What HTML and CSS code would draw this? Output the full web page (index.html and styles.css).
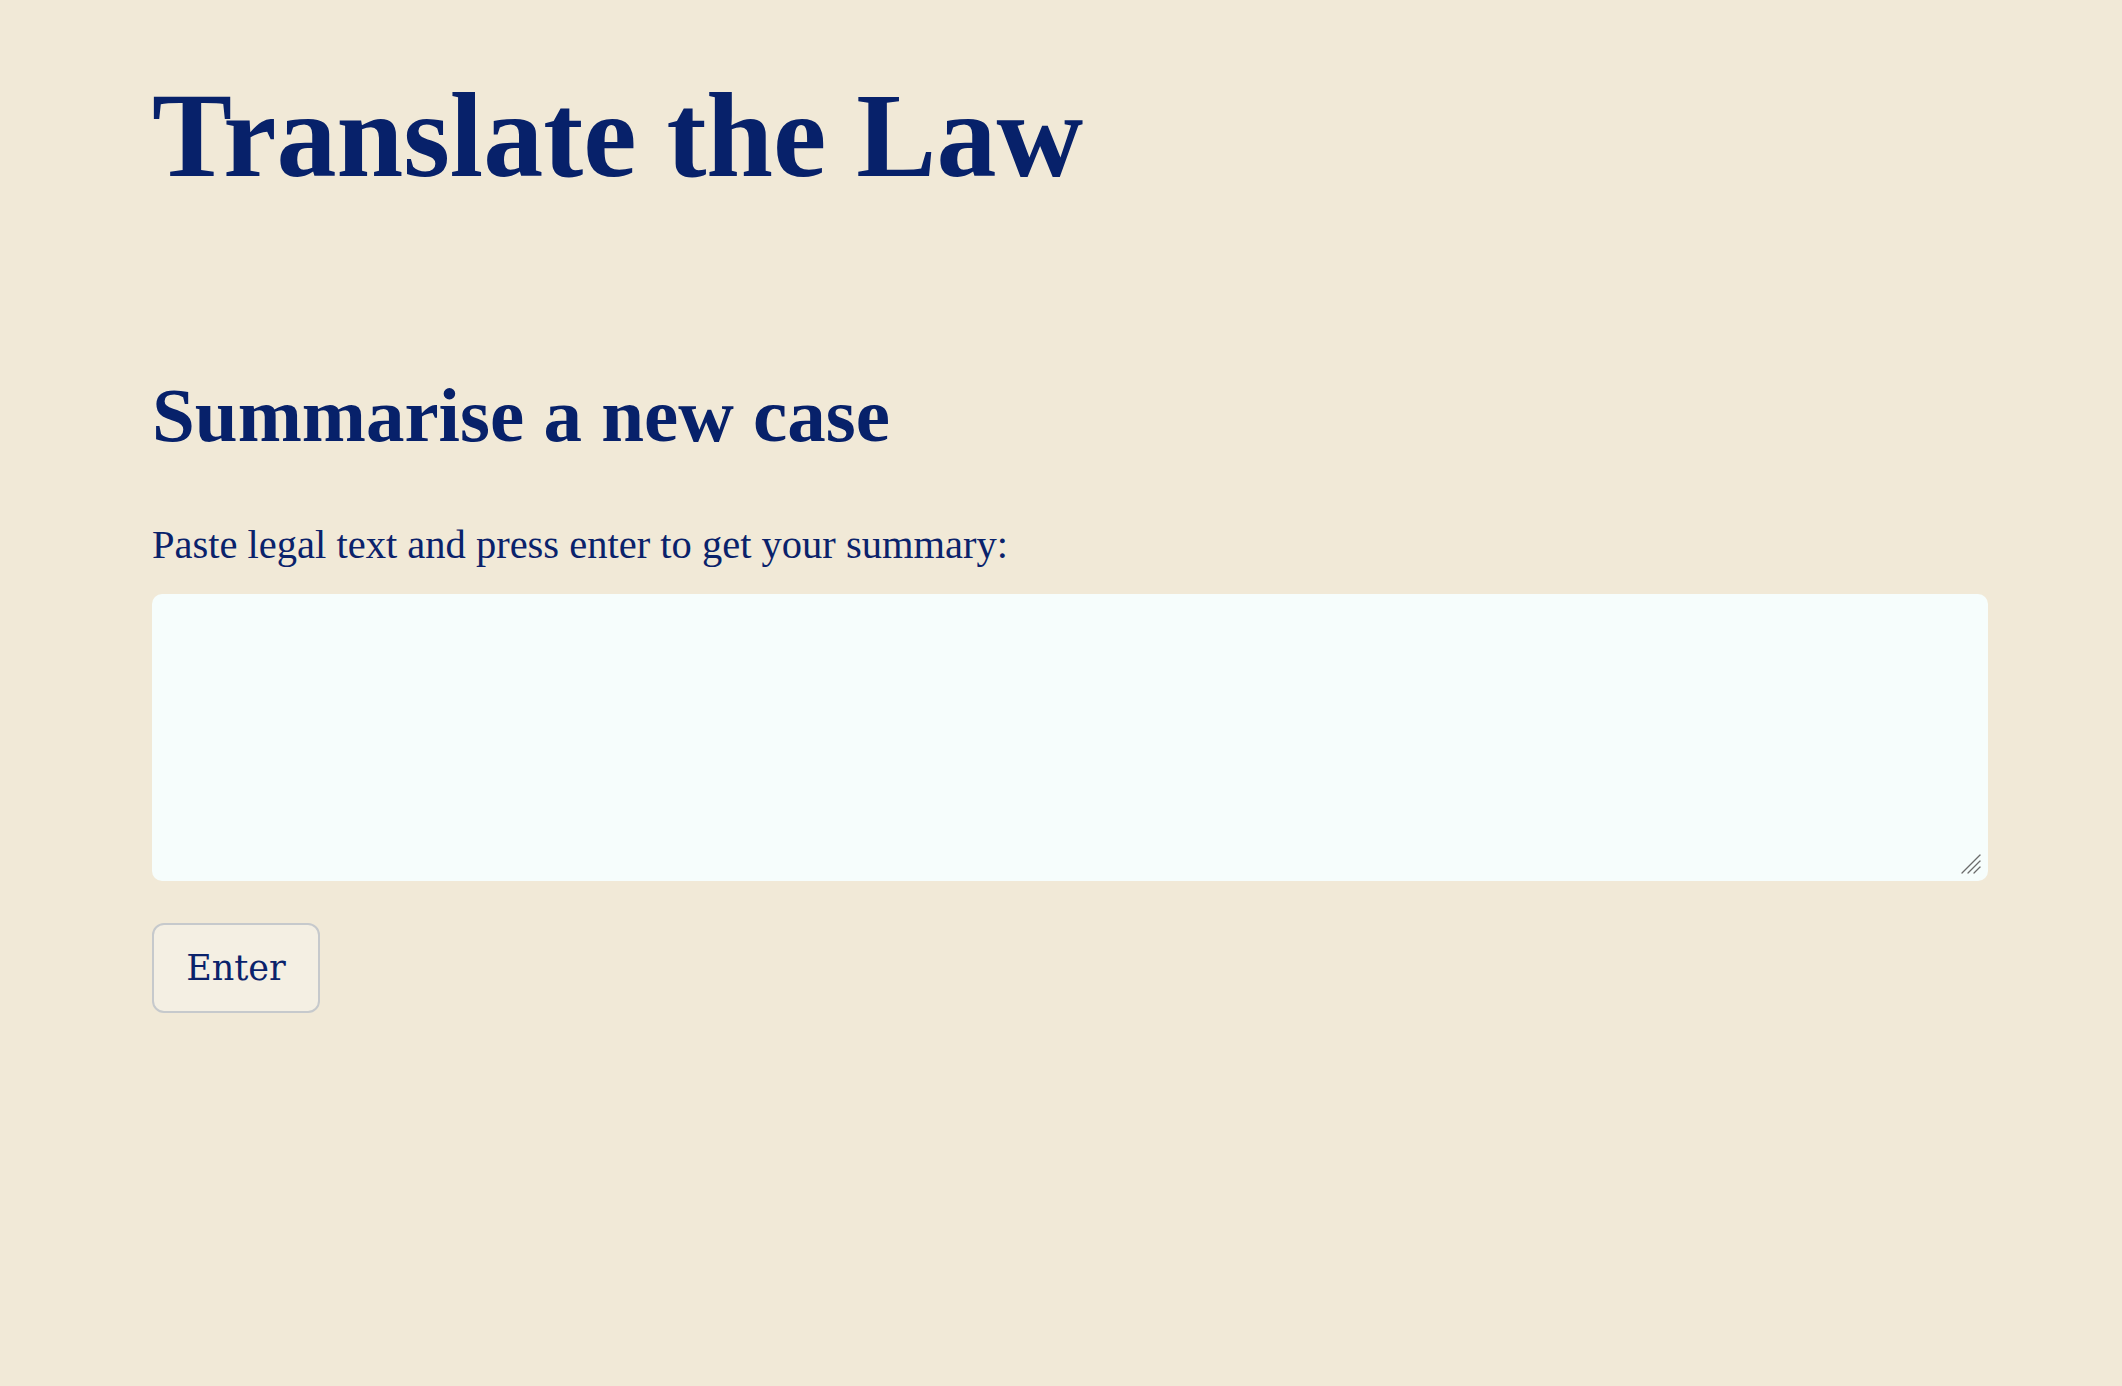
FILE: index.html
```html
<!DOCTYPE html>
<html lang="en">
<head>
<meta charset="utf-8">
<title>Translate the Law</title>
<link rel="stylesheet" href="styles.css">
</head>
<body>
<main class="page">
  <h1 class="title">Translate the Law</h1>
  <h2 class="section-title">Summarise a new case</h2>
  <p class="prompt">Paste legal text and press enter to get your summary:</p>
  <div class="input-wrap">
    <textarea class="input"></textarea>
    <svg class="grip" width="20" height="20" viewBox="0 0 20 20" aria-hidden="true">
      <g stroke="#6b6b6b" stroke-width="1.3" stroke-linecap="round">
        <line x1="1" y1="19" x2="19" y2="1"/>
        <line x1="7" y1="19" x2="19" y2="7"/>
        <line x1="13" y1="19" x2="19" y2="13"/>
      </g>
    </svg>
  </div>
  <button class="enter-btn" type="button">Enter</button>
</main>
</body>
</html>
```

FILE: styles.css
```css
html, body {
  margin: 0;
  padding: 0;
  background: #f1e9d7;
}

body {
  font-family: "Liberation Serif", "Times New Roman", serif;
  color: #0a226b;
}

.page {
  padding: 0 134px 0 152px;
  display: flex;
  flex-direction: column;
  align-items: flex-start;
}

.title {
  margin: 76px 0 0 0;
  font-size: 120px;
  line-height: 1;
  font-weight: 700;
  color: #07216a;
}

.section-title {
  margin: 181px 0 0 0;
  font-size: 77px;
  line-height: 1;
  font-weight: 700;
  color: #07216a;
}

.prompt {
  margin: 67px 0 0 0;
  font-size: 40.5px;
  line-height: 48px;
  color: #0a226b;
}

.input-wrap {
  position: relative;
  align-self: stretch;
  margin: 25px 0 0 0;
}

.input {
  display: block;
  box-sizing: border-box;
  width: 100%;
  height: 287px;
  border: none;
  border-radius: 10px;
  background: #f6fdfc;
  outline: none;
  padding: 12px;
  resize: none;
  font-family: "Liberation Serif", serif;
  font-size: 24px;
}

.grip {
  position: absolute;
  right: 7px;
  bottom: 7px;
  pointer-events: none;
}

.enter-btn {
  margin-top: 42px;
  box-sizing: border-box;
  width: 168px;
  height: 90px;
  padding: 0;
  display: flex;
  align-items: center;
  justify-content: center;
  border: 2px solid #c6c9cc;
  border-radius: 12px;
  background: #f4efe3;
  color: #0a226b;
  font-family: "DejaVu Serif", serif;
  font-size: 35px;
  cursor: pointer;
}
```
